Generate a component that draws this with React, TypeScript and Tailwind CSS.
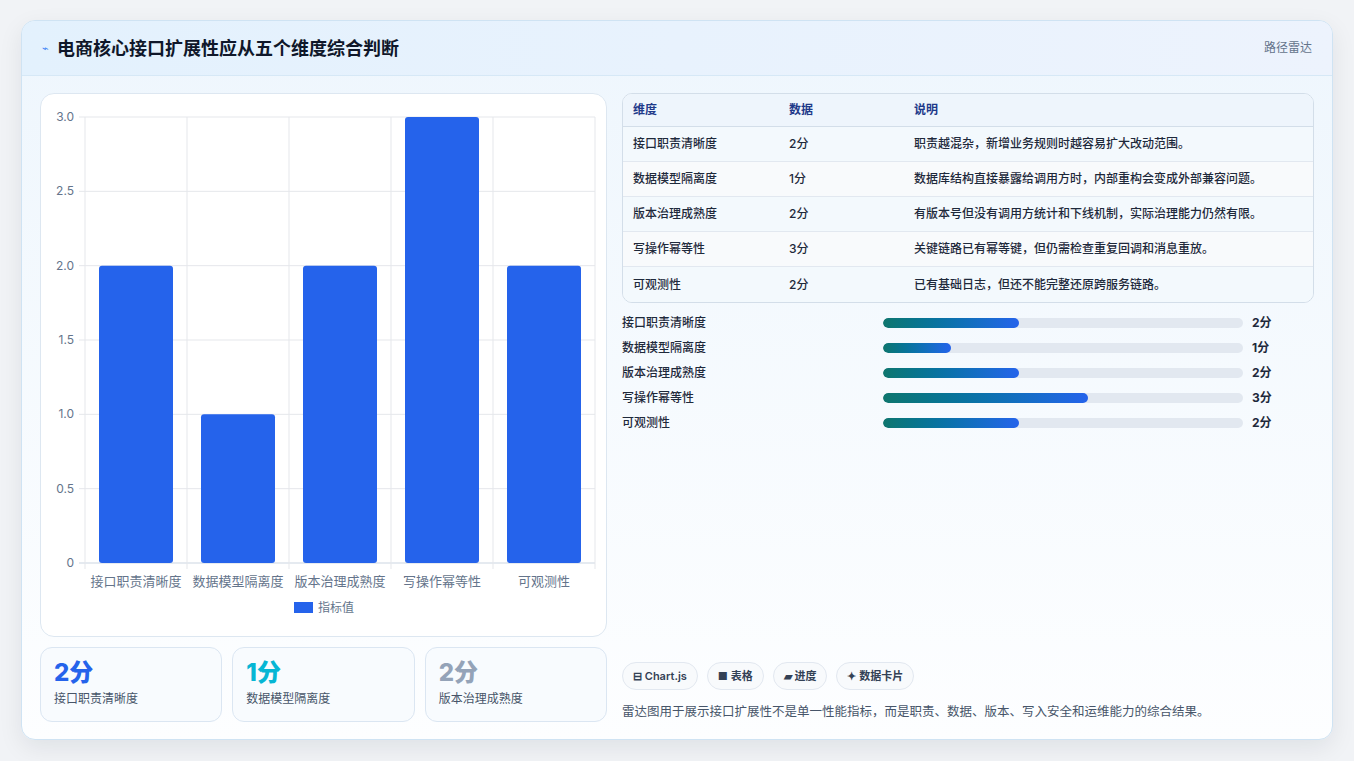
import React from "react";

const dims = [
  { n: "接口职责清晰度", v: 2, d: "职责越混杂，新增业务规则时越容易扩大改动范围。" },
  { n: "数据模型隔离度", v: 1, d: "数据库结构直接暴露给调用方时，内部重构会变成外部兼容问题。" },
  { n: "版本治理成熟度", v: 2, d: "有版本号但没有调用方统计和下线机制，实际治理能力仍然有限。" },
  { n: "写操作幂等性", v: 3, d: "关键链路已有幂等键，但仍需检查重复回调和消息重放。" },
  { n: "可观测性", v: 2, d: "已有基础日志，但还不能完整还原跨服务链路。" },
];

function Chart() {
  const L = 44, R = 554, T = 23, B = 469;
  const cw = (R - L) / 5;
  const y = (v: number) => B - (v / 3) * (B - T);
  return (
    <svg width="566" height="541" className="block">
      {[0, 0.5, 1, 1.5, 2, 2.5, 3].map((t) => (
        <g key={t}>
          <line x1={L - 6} x2={R} y1={y(t)} y2={y(t)} stroke={t === 0 ? "#cbd5e1" : "#e5e7eb"} />
          <text x={L - 11} y={y(t) + 4} textAnchor="end" fontSize="12" fill="#64748b">{t === 0 ? "0" : t.toFixed(1)}</text>
        </g>
      ))}
      {[0, 1, 2, 3, 4, 5].map((i) => (
        <line key={i} x1={L + i * cw} x2={L + i * cw} y1={T} y2={B + 6} stroke="#e5e7eb" />
      ))}
      {dims.map((d, i) => (
        <g key={d.n}>
          <rect x={L + i * cw + 14} y={y(d.v)} width={cw - 28} height={B - y(d.v)} rx="3" fill="#2563eb" />
          <text x={L + i * cw + cw / 2} y={B + 23} textAnchor="middle" fontSize="13" fill="#64748b">{d.n}</text>
        </g>
      ))}
      <rect x="253" y="508" width="19" height="11" fill="#2563eb" />
      <text x="277" y="518" fontSize="12" fill="#64748b">指标值</text>
    </svg>
  );
}

export default function App() {
  const font = { fontFamily: "Inter, 'Noto Sans CJK SC', sans-serif" };
  return (
    <div className="w-[1354px] h-[761px] bg-[#f1f3f6] pt-[20px] pl-[21px]" style={font}>
      <div className="w-[1312px] h-[720px] rounded-[14px] border border-[#cfe3f3] bg-gradient-to-b from-[#eef6fd] to-[#fdfeff] shadow-[0_8px_24px_rgba(15,23,42,0.08)] overflow-hidden flex flex-col">
        <div className="h-[55px] shrink-0 flex items-center justify-between px-[20px] bg-gradient-to-r from-[#e3f1fd] to-[#edf3fd] border-b border-[#d6e8f6]">
          <div className="flex items-center gap-[8px]">
            <span className="text-[#3b82f6] text-[11px]">⌁</span>
            <span className="text-[18px] font-bold text-[#0f172a]">电商核心接口扩展性应从五个维度综合判断</span>
          </div>
          <span className="text-[12px] text-[#64748b]">路径雷达</span>
        </div>
        <div className="flex gap-[15px] px-[18px] pt-[17px]">
          <div className="w-[567px] flex flex-col gap-[10px]">
            <div className="h-[544px] rounded-[14px] border border-[#dde7f1] bg-white">
              <Chart />
            </div>
            <div className="grid grid-cols-3 gap-[10px]">
              {[
                ["2分", "text-[#2563eb]", "接口职责清晰度"],
                ["1分", "text-[#06b6d4]", "数据模型隔离度"],
                ["2分", "text-[#94a3b8]", "版本治理成熟度"],
              ].map(([v, c, n]) => (
                <div key={n} className="h-[75px] rounded-[12px] border border-[#dbe6f2] bg-[#f8fbfe] px-[13px] pt-[10px]">
                  <div className={`text-[24px] font-extrabold leading-[30px] ${c}`}>{v}</div>
                  <div className="text-[12px] text-[#475569] mt-[2px]">{n}</div>
                </div>
              ))}
            </div>
          </div>
          <div className="flex-1 flex flex-col pr-[0px]">
            <div className="rounded-[10px] border border-[#d3dee9] overflow-hidden bg-[#f8fbfd] text-[12px]">
              <div className="flex h-[33px] items-center bg-[#eef5fc] border-b border-[#d3dee9] text-[#1e3a8a] font-semibold">
                <div className="w-[166px] pl-[10px]">维度</div>
                <div className="w-[125px]">数据</div>
                <div className="flex-1">说明</div>
              </div>
              {dims.map((d, i) => (
                <div key={d.n} className={`flex h-[35px] items-center text-[#1e293b] font-medium ${i < 4 ? "border-b border-[#e2e8f0]" : ""} ${i % 2 ? "bg-[#f8fafc]" : "bg-[#f3f9fd]"}`}>
                  <div className="w-[166px] pl-[10px]">{d.n}</div>
                  <div className="w-[125px]">{d.v}分</div>
                  <div className="flex-1">{d.d}</div>
                </div>
              ))}
            </div>
            <div className="flex flex-col gap-[7px] mt-[11px]">
              {dims.map((d) => (
                <div key={d.n} className="flex items-center h-[18px] text-[12px] text-[#1e293b] font-medium">
                  <div className="w-[261px]">{d.n}</div>
                  <div className="w-[360px] h-[10px] rounded-full bg-[#e2e8f0] overflow-hidden">
                    <div className="h-full rounded-full bg-gradient-to-r from-[#0f766e] to-[#2563eb]" style={{ width: `${(d.v / 5.28) * 100}%` }} />
                  </div>
                  <div className="ml-[9px] font-bold">{d.v}分</div>
                </div>
              ))}
            </div>
            <div className="mt-auto flex gap-[9px]">
              {["⊟ Chart.js", "■ 表格", "▰ 进度", "✦ 数据卡片"].map((t) => (
                <span key={t} className="h-[28px] px-[10px] flex items-center rounded-full border border-[#e2e8f0] bg-[#f8fafc] text-[11px] font-semibold text-[#334155]">{t}</span>
              ))}
            </div>
            <div className="mt-[13px] text-[12.5px] text-[#475569]">雷达图用于展示接口扩展性不是单一性能指标，而是职责、数据、版本、写入安全和运维能力的综合结果。</div>
          </div>
        </div>
      </div>
    </div>
  );
}
